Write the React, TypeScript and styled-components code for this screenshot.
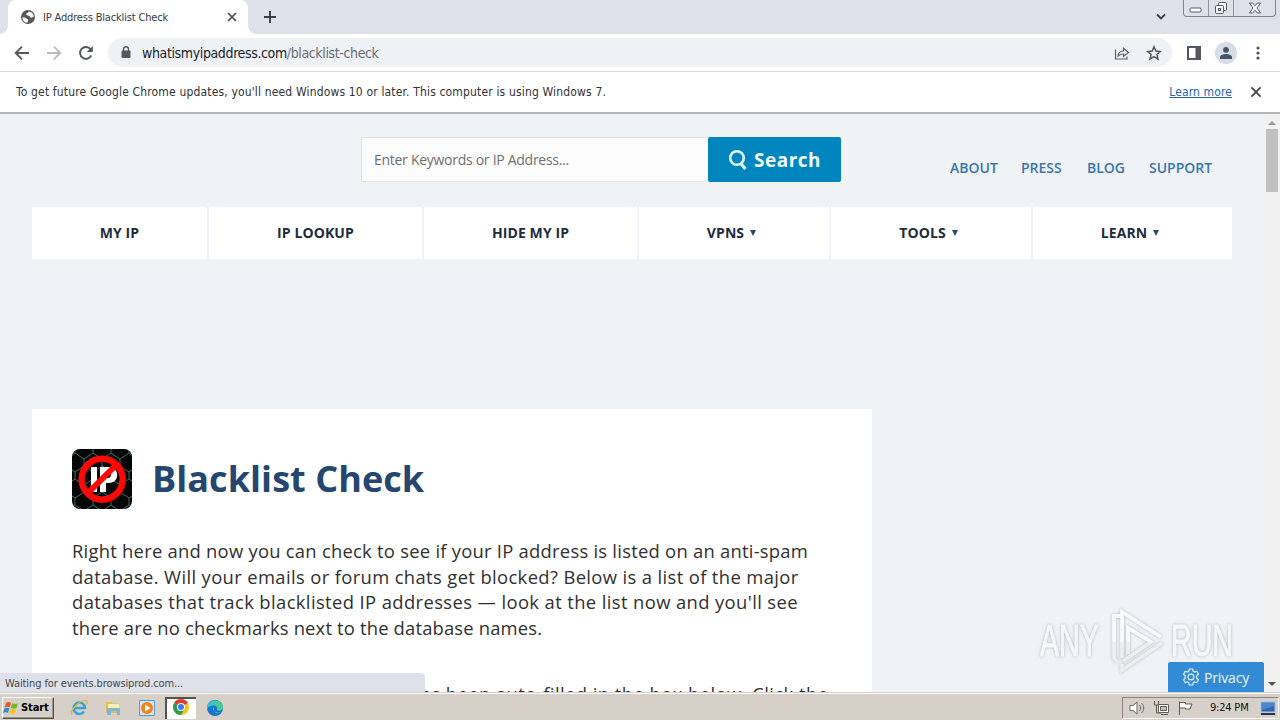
import React from 'react';
import styled, { createGlobalStyle, css } from 'styled-components';

const theme = {
    ui: `'DejaVu Sans Condensed', 'DejaVu Sans', sans-serif`,
    page: `'Open Sans', 'Noto Sans', sans-serif`,
    frame: '#dee1e9',
    pageBg: '#eff3f6',
    taskbar: '#d6d0c8',
};

const menu = [
    { title: 'MY IP', width: 175 },
    { title: 'IP LOOKUP', width: 213 },
    { title: 'HIDE MY IP', width: 213 },
    { title: 'VPNS', width: 190, arrow: true },
    { title: 'TOOLS', width: 200, arrow: true },
    { title: 'LEARN', width: 199, arrow: true },
];

const topLinks = [
    { title: 'ABOUT', width: 47 },
    { title: 'PRESS', width: 42 },
    { title: 'BLOG', width: 38 },
    { title: 'SUPPORT', width: 64 },
];

const intro = [
    { text: 'Right here and now you can check to see if your IP address is listed on an anti-spam', spacing: 0.25 },
    { text: 'database. Will your emails or forum chats get blocked? Below is a list of the major', spacing: 0.365 },
    { text: "databases that track blacklisted IP addresses — look at the list now and you'll see", spacing: 0.385 },
    { text: 'there are no checkmarks next to the database names.', spacing: 0.17 },
];

export default function App() {
    return (
        <>
            <GlobalStyle />
            <Screen>
                <TabStrip />
                <Toolbar />
                <InfoBar>
                    <InfoText>
                        To get future Google Chrome updates, you'll need Windows 10 or later. This computer is using
                        Windows 7.
                    </InfoText>
                    <LearnMore>Learn more</LearnMore>
                    <CloseIcon size={16} />
                </InfoBar>
                <Viewport>
                    <Page>
                        <Header>
                            <SearchForm>
                                <SearchField>Enter Keywords or IP Address...</SearchField>
                                <SearchButton>
                                    <svg width='20' height='22' viewBox='0 0 20 22' fill='none' stroke='#e6f8ff'>
                                        <circle cx='9' cy='9' r='6.8' strokeWidth='2.6' />
                                        <path d='M13 14.5l4.4 5.5' strokeWidth='3.2' />
                                    </svg>
                                    <span>Search</span>
                                </SearchButton>
                            </SearchForm>
                            <TopLinks>
                                {topLinks.map((l) => (
                                    <TopLink key={l.title} $width={l.width}>
                                        {l.title}
                                    </TopLink>
                                ))}
                            </TopLinks>
                        </Header>
                        <Menu>
                            {menu.map((m) => (
                                <MenuItem key={m.title} $width={m.width} $arrow={m.arrow}>
                                    {m.title}
                                    {m.arrow && <Arrow viewBox='0 0 6 6'><path d='M0 0h6L3 6z' /></Arrow>}
                                </MenuItem>
                            ))}
                        </Menu>
                        <Card>
                            <TitleRow>
                                <BlacklistIcon />
                                <Title>Blacklist Check</Title>
                            </TitleRow>
                            <Paragraph>
                                {intro.map((line) => (
                                    <Line key={line.text} $spacing={line.spacing}>
                                        {line.text}
                                    </Line>
                                ))}
                            </Paragraph>
                            <Paragraph>
                                <Line $spacing={0.44} $indent={337}>
                                    has been auto-filled in the box below. Click the
                                </Line>
                            </Paragraph>
                        </Card>
                    </Page>
                    <Scrollbar>
                        <ScrollArrow viewBox='0 0 16 14' $color='#9b9b9b'><path d='M4 10l4-4 4 4z' /></ScrollArrow>
                        <Thumb />
                        <ScrollArrow viewBox='0 0 16 14' $color='#505050'><path d='M4 4h8L8 8z' /></ScrollArrow>
                    </Scrollbar>
                    <Status>Waiting for events.browsiprod.com...</Status>
                    <Watermark />
                    <Privacy>
                        <GearIcon />
                        <span>Privacy</span>
                    </Privacy>
                </Viewport>
                <Taskbar />
            </Screen>
        </>
    );
}

function TabStrip() {
    return (
        <Strip>
            <Tab>
                <svg width='16' height='16' viewBox='0 0 16 16'>
                    <circle cx='8' cy='8' r='7' fill='#55595d' />
                    <path d='M2.5 8.2c2 .2 3 .2 4 1.4.6.8 1.8.6 1.8 1.6 0 .8-1 1-1 2.6C4 13.400 2.200 11 2.500 8.200zM8.500 2.400c-.3 1-.2 1.300-1.400 1.700-.8.300-.5 1.400-1.300 1.800 1 1 2.800.2 3.700 1 .8.700.4 1.500 1.600 1.700 1 .2 1.300-.6 2.600-.8.200-3-2-5.200-5.200-5.400z' fill='#fff' />
                </svg>
                <TabTitle>IP Address Blacklist Check</TabTitle>
                <CloseIcon size={14} />
            </Tab>
            <NewTab viewBox='0 0 14 14'><path d='M7 1v12M1 7h12' /></NewTab>
            <Chevron viewBox='0 0 12 8'><path d='M2 1.500l4 4 4-4' /></Chevron>
            <WindowButtons>
                <WindowButton $width={24}>
                    <svg width='14' height='6'><rect x='1' y='1' width='11' height='4' rx='1' fill='#fff' stroke='#555b66' /></svg>
                </WindowButton>
                <WindowButton $width={25}>
                    <svg width='14' height='14' fill='#f4f5f8' stroke='#555b66'>
                        <rect x='4.500' y='1.500' width='8' height='8' rx='1' />
                        <rect x='1.500' y='4.500' width='8' height='8' rx='1' />
                        <rect x='4.500' y='7.500' width='2' height='2' />
                    </svg>
                </WindowButton>
                <WindowButton $width={42}>
                    <svg width='14' height='12' viewBox='0 0 14 12' fill='#fff' stroke='#555b66'>
                        <path d='M1.500 1h3.200L7 3.700 9.300 1h3.200L9 6l3.500 5H9.300L7 8.300 4.700 11H1.500L5 6z' />
                    </svg>
                </WindowButton>
            </WindowButtons>
        </Strip>
    );
}

function Toolbar() {
    return (
        <Bar>
            <NavIcon viewBox='0 0 16 16'><path d='M15 8H2M8 1.700L1.700 8 8 14.300' /></NavIcon>
            <NavIcon viewBox='0 0 16 16' $muted><path d='M1 8h13M8 1.700L14.300 8 8 14.300' /></NavIcon>
            <NavIcon viewBox='0 0 16 16'>
                <path d='M13.300 10.400A5.900 5.900 0 1 1 12.500 4.100L14 5.600' />
                <path d='M14.800 1v6H8.800z' fill='#53565a' stroke='none' />
            </NavIcon>
            <Omnibox>
                <svg width='10' height='13' viewBox='0 0 10 13'>
                    <rect x='0.500' y='4.500' width='9' height='7.500' rx='1' fill='#54575b' />
                    <path d='M2.500 5V3.300a2.500 2.500 0 0 1 5 0V5' fill='none' stroke='#54575b' strokeWidth='1.400' />
                </svg>
                <Url>
                    whatismyipaddress.com<UrlPath>/blacklist-check</UrlPath>
                </Url>
                <svg width='16' height='16' viewBox='0 0 16 16' fill='none' stroke='#5f6368' strokeWidth='1.200'>
                    <path d='M1.500 4.500V14H13v-2.500' />
                    <path d='M4 11c.4-3.500 2.500-5 5.500-5V3.300L14.500 7.500l-5 4V9C7 9 5.400 9.600 4 11z' />
                </svg>
                <Star viewBox='0 0 16 16'>
                    <path d='M8 1.800l1.800 4.300 4.600.4-3.500 3 1.100 4.600L8 11.600l-4 2.500 1.100-4.600-3.500-3 4.600-.4z' />
                </Star>
            </Omnibox>
            <SidePanel width='14' height='14'>
                <path d='M1 1h12v12H1z' fill='none' stroke='#55585c' strokeWidth='2' />
                <path d='M8.500 1H13v12H8.500z' fill='#55585c' />
            </SidePanel>
            <Avatar>
                <svg width='14' height='14' viewBox='0 0 14 14' fill='#48546c'>
                    <circle cx='7' cy='3.800' r='2.900' />
                    <path d='M1 13v-1.800C1 9 4.500 8 7 8s6 1 6 3.200V13z' />
                </svg>
            </Avatar>
            <svg width='4' height='14' fill='#4f5256'>
                <circle cx='2' cy='2' r='1.600' />
                <circle cx='2' cy='7' r='1.600' />
                <circle cx='2' cy='12' r='1.600' />
            </svg>
        </Bar>
    );
}

function CloseIcon({ size }: { size: number }) {
    return (
        <svg width={size} height={size} viewBox='0 0 14 14' stroke='#484b50' strokeWidth='1.700'>
            <path d='M3 3l8 8M11 3l-8 8' />
        </svg>
    );
}

function BlacklistIcon() {
    return (
        <svg width='60' height='60' viewBox='0 0 60 60'>
            <defs>
                <pattern id='fence' width='18' height='26' patternUnits='userSpaceOnUse' x='3' y='4'>
                    <path d='M0 0l9 6 9-6M9 6v7M9 13l-9 6v7M9 13l9 6v7' fill='none' stroke='#4a6468' strokeWidth='1' />
                </pattern>
            </defs>
            <rect width='60' height='60' rx='8' fill='#050606' />
            <rect width='60' height='60' rx='8' fill='url(#fence)' />
            <path d='M19 18h6v25h-6zM28 18h9c11 0 11 16 0 16h-3v9h-6zM34 23v6h2c4 0 4-6 0-6z' fill='#fff' />
            <circle cx='30.500' cy='30.500' r='20.500' fill='none' stroke='#a90000' strokeWidth='6.500' />
            <circle cx='30' cy='30' r='20.500' fill='none' stroke='#fa0b05' strokeWidth='6' />
            <path d='M44.500 15.500l-29 29' stroke='#fa0b05' strokeWidth='6' />
        </svg>
    );
}

function GearIcon() {
    return (
        <svg width='18' height='18' viewBox='0 0 18 18' fill='none' stroke='#dff1ff' strokeWidth='1.200'>
            <path d='M7.300 1h3.400l.5 2.300 1.300.8 2.300-.8 1.700 2.900-1.800 1.600v2.400l1.800 1.600-1.700 2.900-2.300-.8-1.300.8-.5 2.300H7.300l-.5-2.300-1.300-.8-2.300.8-1.700-2.900 1.800-1.600V7.800L1.500 6.200l1.700-2.900 2.300.8 1.300-.8z' strokeLinejoin='round' />
            <circle cx='9' cy='9' r='2.900' />
        </svg>
    );
}

function Watermark() {
    return (
        <Mark>
            <MarkText>ANY</MarkText>
            <svg width='58' height='66' viewBox='0 0 58 66' fill='none' stroke='url(#fade)' strokeWidth='3.800'>
                <defs>
                    <linearGradient id='fade' gradientUnits='userSpaceOnUse' x1='0' y1='0' x2='0' y2='66'>
                        <stop offset='.5' stopColor='#fafbfc' />
                        <stop offset='.52' stopColor='#eceeef' />
                    </linearGradient>
                </defs>
                <path d='M13 8H6v42l4 4M14 50V4l39 25' />
                <path d='M20 46V20l23 14-28 19M54 35L14 62v-6' />
            </svg>
            <MarkText>RUN</MarkText>
        </Mark>
    );
}

function Taskbar() {
    return (
        <Tasks>
            <Start>
                <svg width='16' height='16' viewBox='0 0 16 16'>
                    <path d='M3 3c2-1.500 3.500-1.200 5 0L6.700 7.500c-1.600-1-3-1-5 0z' fill='#e85a24' />
                    <path d='M9 3.300c2 1 3.500 1 6 0L13.500 8c-2 1-3.800.8-5.700-.2z' fill='#76b82c' />
                    <path d='M1.400 8.500c2-1 3.500-1 5 0L5 13c-1.600-1-3-1-5 0z' fill='#368cd2' />
                    <path d='M7.500 8.800c2 1 3.700 1 5.700.2L11.800 13.500c-2 1-3.700.7-5.600-.2z' fill='#f8c22d' />
                </svg>
                <span>Start</span>
            </Start>
            <Shortcut>
                <svg width='18' height='18' viewBox='0 0 18 18' fill='none'>
                    <path d='M14 12.500A5.700 5.700 0 1 1 15 9H4' stroke='#35a4df' strokeWidth='2.600' />
                    <path d='M2 16C-1 11 12-1 17 2c1 1-.2 3-1.500 4' stroke='#e5b53b' strokeWidth='1.300' />
                </svg>
            </Shortcut>
            <Shortcut>
                <svg width='18' height='18' viewBox='0 0 18 18'>
                    <path d='M2 3h5l1 1.500h7V14H2z' fill='#e3bd58' />
                    <path d='M4 5h11v6H4z' fill='#fbf1b5' />
                    <path d='M3 9h13v7h-3v-4H7v4H3z' fill='#7bb8dc' />
                </svg>
            </Shortcut>
            <Shortcut>
                <svg width='18' height='18' viewBox='0 0 18 18'>
                    <path d='M1.500 1.500h15v15h-15z' fill='#cfe6f5' stroke='#5b9bc7' />
                    <circle cx='9' cy='9' r='6' fill='#ef8319' />
                    <path d='M7 5.500l5.500 3.500L7 12.500z' fill='#fff' />
                </svg>
            </Shortcut>
            <Shortcut $active>
                <svg width='18' height='18' viewBox='0 0 18 18'>
                    <circle cx='9' cy='9' r='8' fill='#fbc116' />
                    <path d='M9 9L2.100 5A8 8 0 0 1 15.900 5z' fill='#df3d2f' />
                    <path d='M9 9L2.100 5A8 8 0 0 0 9 17l3.500-6z' fill='#2d9d4d' />
                    <circle cx='9' cy='9' r='4' fill='#fff' />
                    <circle cx='9' cy='9' r='3' fill='#387df0' />
                </svg>
            </Shortcut>
            <Shortcut>
                <svg width='18' height='18' viewBox='0 0 18 18'>
                    <circle cx='9' cy='9' r='8' fill='#1477cc' />
                    <path d='M1.200 7C3-.5 14.500-.5 16.800 7c.8 4-3 5.500-6 4 1.500-2 0-4.500-3-4.500C5 6.500 2 8 1 10z' fill='#35c1c5' />
                    <path d='M8 2c5-1 9 3 9 6.500 0 3-4 4-6 2.500 1.500-2 0-4-2-4.500z' fill='#55cf76' opacity='.65' />
                    <path d='M8 8c-2 4 2 7 7 5-3 2-6 1-7-1z' fill='#d6d0c8' />
                </svg>
            </Shortcut>
            <Tray>
                <svg width='17' height='16' viewBox='0 0 17 16' fill='#fff' stroke='#696662'>
                    <path d='M1 5.500h3L8 2v12l-4-3.500H1z' />
                    <path d='M10.500 5c1.500 2 1.500 4 0 6M12.500 3c3 3 3 7 0 10' fill='none' />
                </svg>
                <svg width='17' height='16' viewBox='0 0 17 16' fill='#fff' stroke='#5f5c58'>
                    <path d='M5.500 4.500h10v8h-10zM8 14.500h7' />
                    <path d='M7.500 6.500h6v4h-6z' fill='#c2c0bc' />
                    <path d='M1.500 1v4h4V1M3.500 5v8h4' fill='none' />
                </svg>
                <svg width='17' height='16' viewBox='0 0 17 16' fill='#fff' stroke='#5f5c58'>
                    <path d='M2.500 15V1.500M2.500 2.500h6v1.500h6.500l-2 5H8.500V8h-6z' />
                </svg>
                <Clock>9:24 PM</Clock>
                <svg width='16' height='14' viewBox='0 0 16 14'>
                    <path d='M1 1h14v10H1z' fill='#3266ae' stroke='#a5c8e6' />
                    <path d='M2 2h12v3L2 9z' fill='#4a86cc' />
                    <path d='M1 12h14v2H1z' fill='#24334f' />
                </svg>
            </Tray>
        </Tasks>
    );
}

const GlobalStyle = createGlobalStyle`
    * {
        box-sizing: border-box;
    }

    body {
        margin: 0;
        overflow: hidden;
    }

    svg {
        display: block;
        flex-shrink: 0;
    }
`;

const Screen = styled.div`
    width: 1280px;
    height: 720px;
    display: flex;
    flex-direction: column;
    overflow: hidden;
    background: #fff;
    font-family: ${theme.ui};
    white-space: nowrap;
`;

const Strip = styled.div`
    height: 34px;
    display: flex;
    padding-left: 8px;
    background: ${theme.frame};
`;

const Tab = styled.div`
    position: relative;
    width: 240px;
    display: flex;
    align-items: center;
    padding: 0 9px 0 12px;
    border-radius: 8px 8px 0 0;
    background: #fff;

    &::before,
    &::after {
        content: '';
        position: absolute;
        bottom: 0;
        width: 8px;
        height: 8px;
    }

    &::before {
        left: -8px;
        background: radial-gradient(circle at 0 0, transparent 7.5px, #fff 8px);
    }

    &::after {
        right: -8px;
        background: radial-gradient(circle at 100% 0, transparent 7.5px, #fff 8px);
    }
`;

const TabTitle = styled.span`
    flex: 1;
    margin-left: 7px;
    font-size: 11px;
    letter-spacing: -0.17px;
    color: #36393d;
`;

const NewTab = styled.svg`
    width: 14px;
    height: 14px;
    margin: 10px auto 0 15px;
    stroke: #393d46;
    stroke-width: 1.9;
`;

const Chevron = styled.svg`
    width: 12px;
    height: 8px;
    margin: 13px 16px 0 0;
    fill: none;
    stroke: #3b3f47;
    stroke-width: 1.8;
`;

const WindowButtons = styled.div`
    height: 17px;
    display: flex;
    margin-right: 4px;
    border: 1px solid #7f848e;
    border-top: 0;
    border-radius: 0 0 4px 4px;
`;

const WindowButton = styled.div<{ $width: number }>`
    width: ${(p) => p.$width}px;
    display: flex;
    align-items: center;
    justify-content: center;

    & + & {
        border-left: 1px solid #8e939c;
    }

    &:first-child {
        padding-top: 4px;
    }
`;

const Bar = styled.div`
    height: 38px;
    display: flex;
    align-items: center;
    padding: 0 20px 0 14px;
    border-bottom: 1px solid #d8dadd;
`;

const NavIcon = styled.svg<{ $muted?: boolean }>`
    width: 16px;
    height: 16px;
    margin-right: 16px;
    fill: none;
    stroke: ${(p) => (p.$muted ? '#b9bbbe' : '#53565a')};
    stroke-width: 1.9;
`;

const Omnibox = styled.div`
    flex: 1;
    height: 29px;
    display: flex;
    align-items: center;
    margin-left: -2px;
    padding: 0 10px 0 13px;
    border-radius: 15px;
    background: #eff2f5;
`;

const Url = styled.span`
    flex: 1;
    margin-left: 11px;
    font-size: 14px;
    letter-spacing: -0.37px;
    color: #202328;
`;

const UrlPath = styled.span`
    color: #686c71;
`;

const Star = styled.svg`
    width: 16px;
    height: 16px;
    margin-left: 16px;
    fill: none;
    stroke: #55585d;
    stroke-width: 1.5;
`;

const SidePanel = styled.svg`
    margin: 0 14px 0 15px;
`;

const Avatar = styled.div`
    width: 22px;
    height: 22px;
    display: flex;
    align-items: center;
    justify-content: center;
    margin-right: 19px;
    border-radius: 50%;
    background: #d7dde5;
`;

const InfoBar = styled.div`
    height: 42px;
    display: flex;
    align-items: center;
    padding: 1px 16px 1px;
    border-bottom: 2px solid #b1b6b9;
    font-size: 12px;
`;

const InfoText = styled.span`
    flex: 1;
    letter-spacing: 0.16px;
    color: #303236;
`;

const LearnMore = styled.span`
    margin-right: 16px;
    letter-spacing: 0.12px;
    color: #2464b8;
    text-decoration: underline;
`;

const Viewport = styled.div`
    position: relative;
    height: 578px;
    display: flex;
    overflow: hidden;
    background: ${theme.pageBg};
`;

const Page = styled.div`
    flex: 1;
    padding: 23px 32px 0;
    font-family: ${theme.page};
`;

const Header = styled.div`
    height: 70px;
    display: flex;
    padding-left: 329px;
`;

const SearchForm = styled.div`
    width: 480px;
    height: 45px;
    display: flex;
`;

const SearchField = styled.div`
    width: 347px;
    padding-left: 12px;
    border: 1px solid #e2e3e5;
    border-right: 0;
    background: #fcfcfc;
    font-size: 14px;
    line-height: 44px;
    letter-spacing: -0.28px;
    color: #6f6f6f;
`;

const SearchButton = styled.div`
    width: 133px;
    display: flex;
    align-items: center;
    gap: 6px;
    padding-left: 20px;
    border-radius: 2px;
    background: #0085be;
    font-size: 19px;
    font-weight: 700;
    letter-spacing: 0.5px;
    color: #effbff;
`;

const TopLinks = styled.div`
    display: flex;
    gap: 24px;
    margin: 21px 0 0 109px;
`;

const TopLink = styled.a<{ $width: number }>`
    width: ${(p) => p.$width}px;
    font-size: 14px;
    line-height: 20px;
    font-weight: 600;
    color: #3b75af;
`;

const Menu = styled.div`
    height: 52px;
    display: flex;
    gap: 2px;
`;

const MenuItem = styled.div<{ $width: number; $arrow?: boolean }>`
    width: ${(p) => p.$width}px;
    display: flex;
    align-items: center;
    justify-content: center;
    padding: 0 ${(p) => (p.$arrow ? 5 : 0)}px 2px 0;
    background: #fff;
    font-size: 14px;
    font-weight: 700;
    letter-spacing: 0.1px;
    color: #202c3d;
`;

const Arrow = styled.svg`
    width: 6px;
    height: 6px;
    margin: 2px 0 0 6px;
    fill: #244c68;
`;

const Card = styled.div`
    width: 840px;
    height: 340px;
    margin-top: 150px;
    padding: 40px;
    background: #fff;
`;

const TitleRow = styled.div`
    display: flex;
    align-items: center;
    gap: 20px;
    margin-bottom: 29px;
`;

const Title = styled.h1`
    margin: 0;
    font-size: 36px;
    line-height: 60px;
    font-weight: 700;
    letter-spacing: 0.06px;
    color: #24466f;
`;

const Paragraph = styled.p`
    margin: 0 0 40.6px;
    font-size: 18.4px;
    line-height: 25.6px;
    color: #303030;
`;

const Line = styled.span<{ $spacing: number; $indent?: number }>`
    display: block;
    padding-left: ${(p) => p.$indent || 0}px;
    letter-spacing: ${(p) => p.$spacing}px;
`;

const Scrollbar = styled.div`
    width: 16px;
    display: flex;
    flex-direction: column;
    background: #f1f1f1;
`;

const ScrollArrow = styled.svg<{ $color: string }>`
    width: 16px;
    height: 14px;
    margin-top: 1px;
    fill: ${(p) => p.$color};

    &:last-child {
        margin-top: auto;
    }
`;

const Thumb = styled.div`
    width: 12px;
    height: 63px;
    margin-left: 2px;
    background: #c0c0c0;
`;

const Status = styled.div`
    position: absolute;
    left: 0;
    bottom: 0;
    width: 425px;
    height: 19px;
    padding-left: 5px;
    border-radius: 0 4px 0 0;
    background: ${theme.frame};
    font-size: 11px;
    line-height: 21px;
    letter-spacing: -0.1px;
    color: #43474c;
`;

const Mark = styled.div`
    position: absolute;
    left: 1040px;
    bottom: 18px;
    height: 66px;
    display: flex;
    align-items: center;
    gap: 5px;
    filter: drop-shadow(0 0 1.5px #b4b7b9);
`;

const MarkText = styled.span`
    width: 63px;
    font: 44px / 50px 'Liberation Sans', sans-serif;
    color: #f5f7f8;
    -webkit-text-stroke: 1px #f5f7f8;
    transform: scaleX(0.65);
    transform-origin: 0 50%;
`;

const Privacy = styled.div`
    position: absolute;
    right: 16px;
    bottom: 0;
    width: 96px;
    height: 30px;
    display: flex;
    align-items: center;
    gap: 4px;
    padding-left: 14px;
    border-radius: 2px 2px 0 0;
    background: #338bd6;
    font: 14px ${theme.page};
    letter-spacing: -0.15px;
    color: #eff8ff;
`;

const Tasks = styled.div`
    height: 28px;
    display: flex;
    align-items: center;
    padding: 2px 1px 0 2px;
    border-top: 1px solid ${theme.taskbar};
    background: ${theme.taskbar};
    box-shadow: inset 0 1px #fff;
`;

const raised = css`
    border: 1px solid;
    border-color: #fff #55524e #55524e #fff;
    box-shadow: inset -1px -1px #99948d;
`;

const Start = styled.div`
    ${raised}
    width: 52px;
    height: 22px;
    display: flex;
    align-items: center;
    gap: 2px;
    margin-right: 6px;
    font-size: 11px;
    font-weight: 700;
    letter-spacing: -0.1px;
    color: #000;
`;

const Shortcut = styled.div<{ $active?: boolean }>`
    width: 31px;
    height: 22px;
    display: flex;
    align-items: center;
    justify-content: center;
    margin-left: 3px;

    ${(p) =>
        p.$active &&
        css`
            padding: 0 2px 3px 0;
            border: 1px solid #55524e;
            border-width: 2px 0 0 2px;
            background: #fff;
        `}
`;

const Tray = styled.div`
    width: 157px;
    height: 22px;
    display: flex;
    align-items: center;
    gap: 7px;
    margin-left: auto;
    padding-left: 6px;
    border: 1px solid;
    border-color: #8b8780 #fff #fff #8b8780;
`;

const Clock = styled.span`
    width: 43px;
    margin: 0 0 0 9px;
    font-size: 11px;
    letter-spacing: -0.2px;
    color: #111;
`;
